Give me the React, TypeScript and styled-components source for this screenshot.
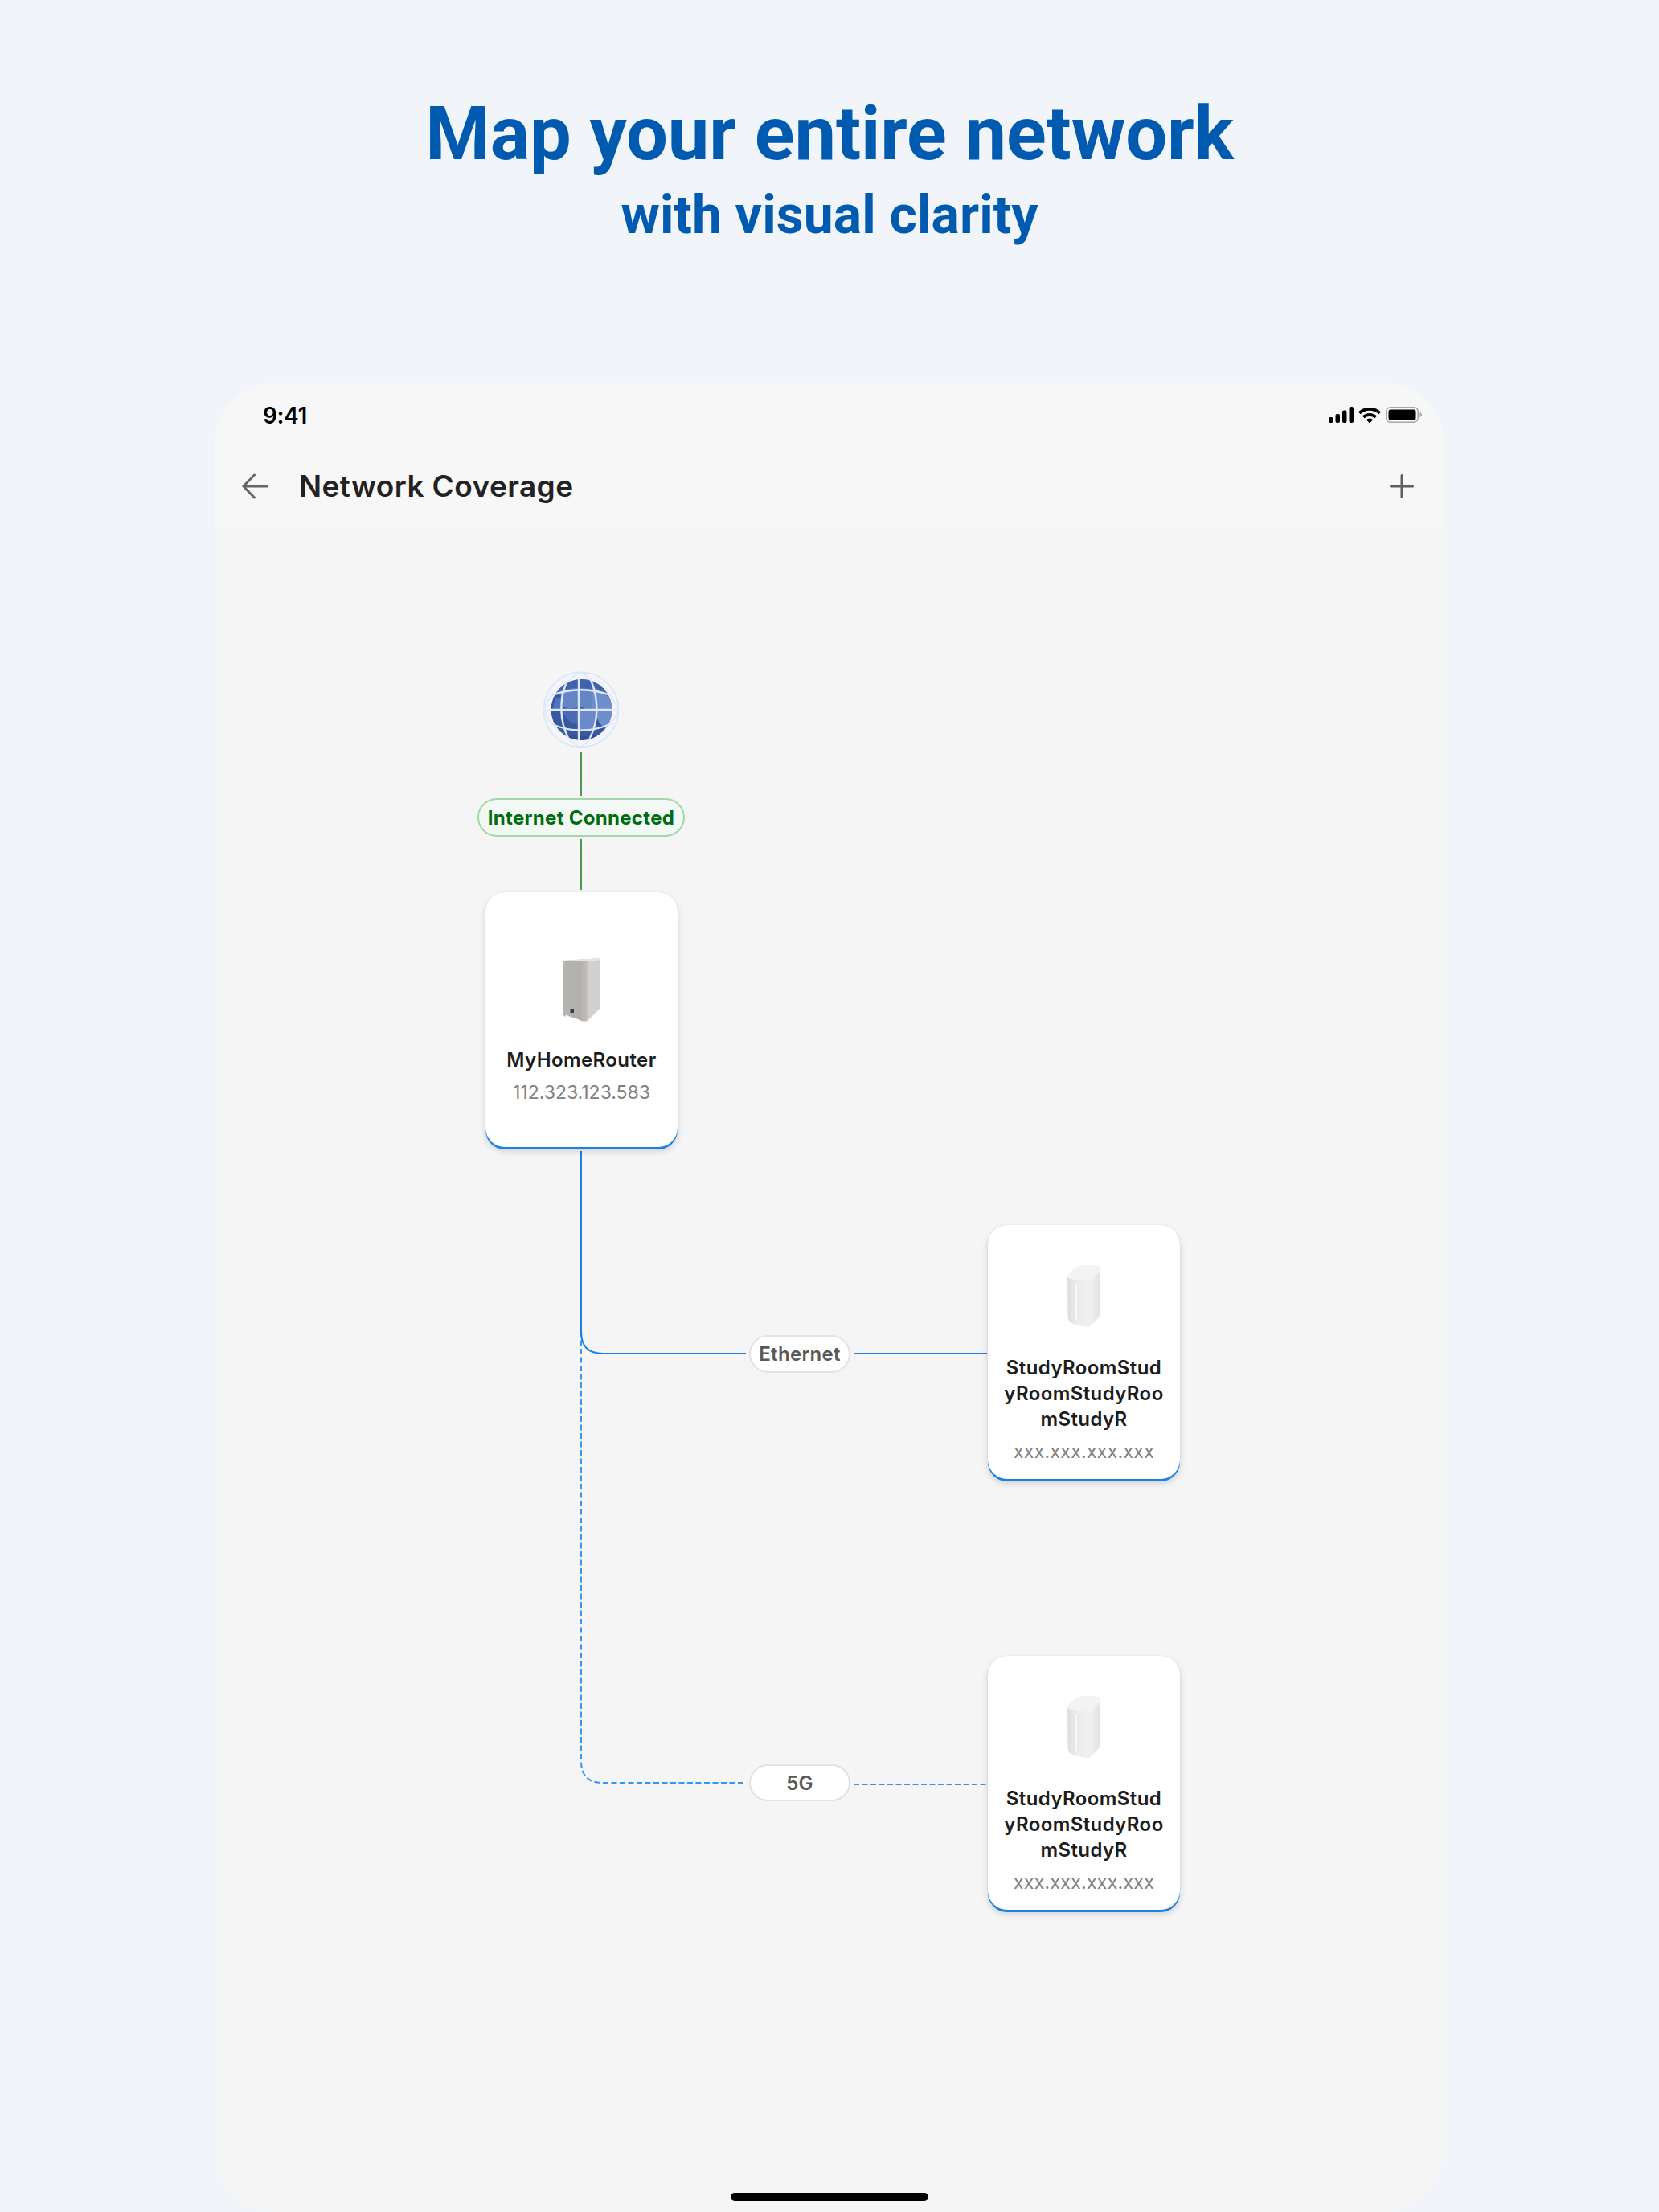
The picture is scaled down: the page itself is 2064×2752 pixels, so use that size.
// Library imports
import React, { FC } from 'react';
import styled, { createGlobalStyle } from 'styled-components';

const GlobalStyle = createGlobalStyle`
    html, body {
        margin: 0;
        padding: 0;
        background: #f1f5fa;
    }
`;

const Page = styled.div`
    width: 2064px;
    height: 2752px;
    display: flex;
    flex-direction: column;
    align-items: center;
    overflow: hidden;
    background: #f1f5fa;
`;

const Headline = styled.header`
    padding-top: 113px;
    text-align: center;
    color: #005bb0;
    font-family: Roboto, sans-serif;
    font-weight: 700;
`;

const Title = styled.h1`
    margin: 0;
    font-size: 92px;
    line-height: 108px;
    font-weight: 700;
    letter-spacing: -0.06px;
`;

const Subtitle = styled.h2`
    margin: 7px 0 0;
    font-size: 66px;
    line-height: 80px;
    font-weight: 700;
    letter-spacing: 0.12px;
`;

const Phone = styled.section`
    position: relative;
    margin-top: 168px;
    width: 1530px;
    flex: 1;
    display: flex;
    flex-direction: column;
    border-radius: 76px;
    overflow: hidden;
    background: #f5f5f5;
    font-family: Inter, sans-serif;
`;

const StatusBar = styled.div`
    height: 68px;
    padding: 26px 28px 0 60px;
    box-sizing: border-box;
    display: flex;
    justify-content: space-between;
    align-items: flex-start;
    background: #f7f7f7;
`;

const Clock = styled.span`
    font-size: 28px;
    line-height: 30px;
    font-weight: 600;
    letter-spacing: -0.4px;
    color: #000;
`;

const StatusIcons = styled.div`
    display: flex;
    align-items: center;
    gap: 6px;
    margin: 4px 0 0;
`;

const NavBar = styled.div`
    height: 113px;
    padding: 9px 38px 0 34px;
    box-sizing: border-box;
    display: flex;
    align-items: center;
    background: #f7f7f7;
`;

const NavTitle = styled.h3`
    margin: 0 0 0 38px;
    flex: 1;
    font-size: 37px;
    line-height: 44px;
    font-weight: 600;
    letter-spacing: 0.4px;
    color: #222;
`;

const Canvas = styled.div`
    position: relative;
    flex: 1;
`;

const Wires = styled.svg`
    position: absolute;
    left: 0;
    top: 0;
    width: 100%;
    height: 100%;
`;

const GlobeNode = styled.svg`
    position: absolute;
    left: 408px;
    top: 178px;
    width: 96px;
    height: 96px;
`;

const StatusPill = styled.div`
    position: absolute;
    left: 327px;
    top: 336px;
    width: 258px;
    height: 48px;
    box-sizing: border-box;
    display: flex;
    align-items: center;
    justify-content: center;
    border: 2px solid #a3d8a6;
    border-radius: 24px;
    background: #f2f9f4;
    color: #006b0c;
    font-size: 24px;
    font-weight: 700;
    letter-spacing: 0.3px;
`;

const LinkPill = styled.div<{ $top: number; $h: number }>`
    position: absolute;
    left: 665px;
    top: ${(p) => p.$top}px;
    width: 126px;
    height: ${(p) => p.$h}px;
    box-sizing: border-box;
    display: flex;
    align-items: center;
    justify-content: center;
    border: 2px solid #e2e2e2;
    border-radius: 24px;
    background: #fff;
    color: #585858;
    font-size: 24px;
    font-weight: 600;
    letter-spacing: 0.3px;
`;

const DeviceCard = styled.div<{ $x: number; $y: number; $h: number; $pad: number }>`
    position: absolute;
    left: ${(p) => p.$x}px;
    top: ${(p) => p.$y}px;
    width: 239px;
    height: ${(p) => p.$h}px;
    padding-top: ${(p) => p.$pad}px;
    box-sizing: border-box;
    display: flex;
    flex-direction: column;
    align-items: center;
    text-align: center;
    background: #fff;
    border-radius: 24px;
    box-shadow:
        0 3px 0 #1a82e6,
        0 5px 9px rgba(0, 0, 0, 0.16),
        0 0 1px rgba(0, 0, 0, 0.14);
`;

const DeviceName = styled.div<{ $gap: number }>`
    margin-top: ${(p) => p.$gap}px;
    width: 204px;
    font-size: 24px;
    line-height: 32px;
    font-weight: 600;
    letter-spacing: 0.4px;
    color: #1c1c1c;
    word-break: break-all;
`;

const DeviceAddress = styled.div<{ $tracking: number }>`
    margin-top: 8px;
    font-size: 23px;
    line-height: 32px;
    font-weight: 400;
    letter-spacing: ${(p) => p.$tracking}px;
    color: #808080;
`;

const HomeIndicator = styled.div`
    position: absolute;
    left: 642px;
    bottom: 14px;
    width: 246px;
    height: 10px;
    border-radius: 5px;
    background: #000;
`;

const SignalIcon: FC = () => (
    <svg width="31" height="20" viewBox="0 0 31 20">
        <rect x="0" y="13" width="5.5" height="7" rx="2" fill="#000" />
        <rect x="8.5" y="9" width="5.5" height="11" rx="2" fill="#000" />
        <rect x="17" y="4.5" width="5.5" height="15.5" rx="2" fill="#000" />
        <rect x="25.5" y="0" width="5.5" height="20" rx="2" fill="#000" />
    </svg>
);

const WifiIcon: FC = () => (
    <svg width="28" height="20" viewBox="0 0 28 20">
        <path d="M0 6.6 A20 20 0 0 1 28 6.6 L25.4 9.3 A16.4 16.4 0 0 0 2.6 9.3 Z" fill="#000" />
        <path d="M5 11.6 A13 13 0 0 1 23 11.6 L20.4 14.3 A9.4 9.4 0 0 0 7.6 14.3 Z" fill="#000" />
        <path d="M9.8 16.3 A6 6 0 0 1 18.2 16.3 L14 20.4 Z" fill="#000" />
    </svg>
);

const BatteryIcon: FC = () => (
    <svg width="45" height="20" viewBox="0 0 45 20">
        <rect x="0.75" y="0.75" width="39.5" height="18.5" rx="5" fill="none" stroke="#a6a6a6" stroke-width="1.5" />
        <rect x="3.5" y="3.5" width="34" height="13" rx="2.5" fill="#000" />
        <path d="M42.5 7 C44 7.5 45 8.6 45 10 C45 11.4 44 12.5 42.5 13 Z" fill="#a6a6a6" />
    </svg>
);

const BackIcon: FC = () => (
    <svg width="33" height="32" viewBox="0 0 33 32" fill="none" stroke="#666" stroke-width="3" stroke-linecap="round" stroke-linejoin="round">
        <path d="M31.5 16 H2 M15.5 2 L1.8 16 L15.5 30" />
    </svg>
);

const PlusIcon: FC = () => (
    <svg width="30" height="30" viewBox="0 0 30 30" fill="none" stroke="#5f5f5f" stroke-width="3" stroke-linecap="round">
        <path d="M15 1.5 V28.5 M1.5 15 H28.5" />
    </svg>
);

const Globe: FC = () => (
    <GlobeNode viewBox="0 0 96 96">
        <defs>
            <clipPath id="sphere">
                <circle cx="48.5" cy="48" r="38" />
            </clipPath>
        </defs>
        <circle cx="48" cy="48" r="46.5" fill="#f3f5fb" stroke="#dfe7f7" stroke-width="2" />
        <circle cx="48.5" cy="48" r="38" fill="#38589f" />
        <g clipPath="url(#sphere)">
            <path d="M8 10 H88 V30 H8 Z" fill="#3f62ad" />
            <path d="M24 24 C38 20 54 20 68 24 L68 48 C60 50 56 54 52 46 C44 42 36 50 26 44 C22 36 22 28 24 22 Z" fill="#6486c7" />
            <path d="M64 20 L88 36 L88 72 C78 74 70 66 68 58 L62 50 C60 40 62 26 64 20 Z" fill="#6f8fcc" />
            <path d="M44 50 L66 50 C70 60 66 70 62 72 L44 72 Z" fill="#6a8aca" />
            <path d="M16 34 L26 34 C24 42 24 46 26 48 L12 48 Z" fill="#5374b9" />
            <path d="M26 50 L44 50 L44 66 C36 66 28 60 26 50 Z" fill="#4a6bb3" />
            <path d="M8 72 C30 84 66 84 90 72 L90 90 L8 90 Z" fill="#2f4f99" />
        </g>
        <g fill="none" stroke="#dfe7f7" stroke-width="2.4">
            <path d="M45 10 V86" />
            <path d="M10 48 H86" />
            <path d="M29 16 C21 36 21 62 32 83" />
            <path d="M60 11 C70 34 70 62 59 83" />
            <path d="M12 30 C34 21 62 21 84 30" />
            <path d="M12 66 C34 76 62 76 84 66" />
        </g>
        <g fill="none" stroke="#dfe7f7" stroke-width="1.6">
            <path d="M2 48 H12 M84 48 H94" />
            <path d="M29 16 C34 10 40 5 46 2" />
            <path d="M60 11 C56 8 52 4 48 2" />
            <path d="M32 83 C36 88 40 92 46 94" />
            <path d="M59 83 C56 88 52 92 48 94" />
            <path d="M12 30 C8 34 5 40 3 46" />
            <path d="M84 30 C88 34 91 40 93 46" />
            <path d="M12 66 C8 62 5 56 3 50" />
            <path d="M84 66 C88 62 91 56 93 50" />
        </g>
    </GlobeNode>
);

const MainRouter: FC = () => (
    <svg width="46" height="79" viewBox="0 0 46 79">
        <defs>
            <linearGradient id="routerFront" x1="0" y1="0" x2="1" y2="0">
                <stop offset="0" stop-color="#b4b4b0" />
                <stop offset="0.45" stop-color="#b3b0ac" />
                <stop offset="0.6" stop-color="#bcbab8" />
                <stop offset="0.7" stop-color="#d2d2d0" />
                <stop offset="1" stop-color="#cfcfce" />
            </linearGradient>
        </defs>
        <path d="M0 3 L46 0 L46 62 C42 66 36 72 30 78 C27 79 23 79 18 76 L6 72 L4 70 L2 73 L0 71 Z" fill="url(#routerFront)" />
        <path d="M0 3 L46 0 L44 2.5 L24 4 L1 4 Z" fill="#e6e6e5" />
        <rect x="8.5" y="63" width="4.5" height="5" fill="#3a3a3a" />
        <circle cx="10" cy="54" r="1" fill="#a09f9c" />
    </svg>
);

const SatelliteRouter: FC = () => (
    <svg width="41" height="77" viewBox="0 0 41 77">
        <defs>
            <linearGradient id="satFront" x1="0" y1="0" x2="1" y2="0">
                <stop offset="0" stop-color="#dcdcdc" />
                <stop offset="0.25" stop-color="#ececec" />
                <stop offset="0.7" stop-color="#f0f0f0" />
                <stop offset="1" stop-color="#e2e2e2" />
            </linearGradient>
        </defs>
        <path d="M0 14 C4 8 10 3 15 1 C22 0 30 0 37 1 C40 1 41 3 41 6 L41 62 C37 68 32 73 27 77 C20 77 8 74 3 71 C1 69 0.5 66 0.5 62 Z" fill="url(#satFront)" />
        <path d="M0 14 C4 8 10 3 15 1 C22 0 30 0 37 1 C40 1 41 3 41 6 C38 11 33 16 28 20 C20 19 10 18 4 17 C2 17 0.5 16 0 14 Z" fill="#f3f3f3" />
        <rect x="8.5" y="22" width="4.5" height="48" rx="2" fill="#f7f7f7" stroke="#dfdfdf" stroke-width="0.8" />
    </svg>
);

interface CardProps {
    x: number;
    y: number;
    h: number;
    pad: number;
    gap: number;
    name: string;
    address: string;
    tracking: number;
    icon: React.ReactNode;
}

const Card: FC<CardProps> = ({ x, y, h, pad, gap, name, address, tracking, icon }: CardProps) => (
    <DeviceCard $x={x} $y={y} $h={h} $pad={pad}>
        {icon}
        <DeviceName $gap={gap}>{name}</DeviceName>
        <DeviceAddress $tracking={tracking}>{address}</DeviceAddress>
    </DeviceCard>
);

const satelliteName = 'StudyRoomStudyRoomStudyRoomStudyR';

const App: FC = () => {
    return (
        <Page>
            <GlobalStyle />
            <Headline>
                <Title>Map your entire network</Title>
                <Subtitle>with visual clarity</Subtitle>
            </Headline>
            <Phone>
                <StatusBar>
                    <Clock>9:41</Clock>
                    <StatusIcons>
                        <SignalIcon />
                        <WifiIcon />
                        <BatteryIcon />
                    </StatusIcons>
                </StatusBar>
                <NavBar>
                    <BackIcon />
                    <NavTitle>Network Coverage</NavTitle>
                    <PlusIcon />
                </NavBar>
                <Canvas>
                    <Wires viewBox="0 0 1530 2095">
                        <g fill="none" stroke="#4a9a50" stroke-width="2">
                            <path d="M456 278 V333" />
                            <path d="M456 387 V450" />
                        </g>
                        <g fill="none" stroke="#3396f0" stroke-width="2" stroke-dasharray="7 3.5">
                            <path d="M456 1000 V1534 Q456 1561 483 1561 H661" />
                            <path d="M795 1563 H961" />
                        </g>
                        <g fill="none" stroke="#1a82e6" stroke-width="2">
                            <path d="M456 775 V1000 Q456 1027 483 1027 H661" />
                            <path d="M795 1027 H961" />
                        </g>
                    </Wires>
                    <Globe />
                    <StatusPill>Internet Connected</StatusPill>
                    <Card x={337} y={453} h={317} pad={82} gap={32} name="MyHomeRouter" address="112.323.123.583" tracking={0} icon={<MainRouter />} />
                    <LinkPill $top={1004} $h={47}>Ethernet</LinkPill>
                    <Card x={962} y={867} h={316} pad={50} gap={35} name={satelliteName} address="xxx.xxx.xxx.xxx" tracking={0.3} icon={<SatelliteRouter />} />
                    <LinkPill $top={1538} $h={46}>5G</LinkPill>
                    <Card x={962} y={1403} h={316} pad={50} gap={35} name={satelliteName} address="xxx.xxx.xxx.xxx" tracking={0.3} icon={<SatelliteRouter />} />
                </Canvas>
                <HomeIndicator />
            </Phone>
        </Page>
    );
};

export default App;
